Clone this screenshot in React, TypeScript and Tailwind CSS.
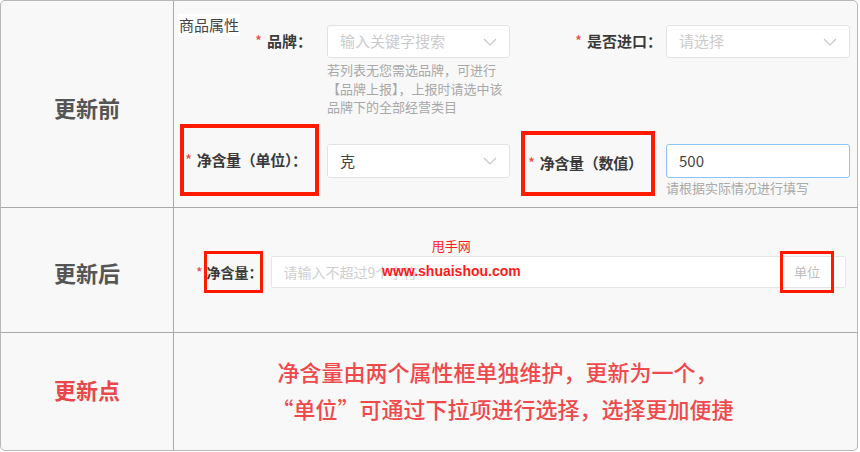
import React from "react";

function Chevron() {
  return (
    <svg width="14" height="8" viewBox="0 0 14 8" className="shrink-0">
      <polyline points="1,1 7,7 13,1" fill="none" stroke="#c6c6c6" strokeWidth="1.2" />
    </svg>
  );
}

function Star() {
  return <span className="text-[#f04040] font-normal mr-[5px]">*</span>;
}

export default function App() {
  return (
    <div className="w-[860px] h-[452px] bg-white font-['Noto_Sans_CJK_SC','Noto_Sans',sans-serif]">
      <div className="w-[858px] h-[451px] border border-[#b8b8b8] rounded-[5px] bg-[#f8f8f8] grid grid-cols-[173px_1fr] grid-rows-[207px_125px_1fr] overflow-hidden">
        {/* Row 1 left */}
        <div className="border-r border-b border-[#a9a9a9] flex items-center justify-center pt-[6px]">
          <span className="text-[22px] font-bold text-[#555]">更新前</span>
        </div>
        {/* Row 1 right */}
        <div className="border-b border-[#a9a9a9] pt-[13px] text-[#3a3a3a]">
          <div className="ml-[4px] h-[22px] w-fit bg-white px-[1px] text-[15px] leading-[22px] text-[#444]">商品属性</div>
          <div className="-mt-[11px] grid grid-cols-[153px_183px_156px_184px]">
            {/* row A */}
            <div className="h-[33px] flex items-center justify-end pr-[15px] text-[15px] font-semibold">
              <Star />品牌：
            </div>
            <div className="h-[33px] bg-white border border-[#e3e3e3] rounded-[3px] flex items-center justify-between pl-[12px] pr-[12px]">
              <span className="text-[15px] text-[#cbcbcb]">输入关键字搜索</span>
              <Chevron />
            </div>
            <div className="h-[33px] flex items-center justify-end pr-[4px] text-[15px] font-semibold">
              <Star />是否进口：
            </div>
            <div className="h-[33px] bg-white border border-[#e3e3e3] rounded-[3px] flex items-center justify-between pl-[12px] pr-[12px]">
              <span className="text-[15px] text-[#cbcbcb]">请选择</span>
              <Chevron />
            </div>
            {/* row B */}
            <div />
            <div className="col-span-3 mt-[3px] text-[13px] leading-[18.5px] text-[#a8a8a8] h-[55px]">
              <div>若列表无您需选品牌，可进行</div>
              <div>【品牌上报】，上报时请选中该</div>
              <div>品牌下的全部经营类目</div>
            </div>
            {/* row C */}
            <div className="mt-[8px]">
              <div className="ml-[6px] w-[139px] h-[72px] border-[4px] border-[#ff1a00] flex items-center pl-[1px] text-[15px] font-semibold whitespace-nowrap tracking-[-0.3px]">
                <Star />净含量（单位）：
              </div>
            </div>
            <div className="mt-[28px] h-[34px] bg-white border border-[#e3e3e3] rounded-[3px] flex items-center justify-between pl-[12px] pr-[12px]">
              <span className="text-[15px] text-[#444]">克</span>
              <Chevron />
            </div>
            <div className="mt-[15px]">
              <div className="ml-[11px] w-[134px] h-[65px] border-[4px] border-[#ff1a00] flex items-center pl-[3px] text-[15px] font-semibold whitespace-nowrap tracking-[-0.3px]">
                <Star />净含量（数值）
              </div>
            </div>
            <div className="mt-[28px]">
              <div className="h-[34px] bg-white border border-[#8cc4f3] rounded-[3px] flex items-center pl-[12px]">
                <span className="text-[15px] text-[#444]">500</span>
              </div>
              <div className="mt-[1px] text-[13px] leading-[17px] text-[#a8a8a8]">请根据实际情况进行填写</div>
            </div>
          </div>
        </div>

        {/* Row 2 left */}
        <div className="border-r border-b border-[#a9a9a9] flex items-center justify-center pt-[4px]">
          <span className="text-[22px] font-bold text-[#555]">更新后</span>
        </div>
        {/* Row 2 right */}
        <div className="relative border-b border-[#a9a9a9] flex items-center pl-[22px] pr-[11px] pt-[4px]">
          <span className="text-[14px] text-[#f04040] mr-[1px]">*</span>
          <div className="w-[59px] h-[42px] border-[3px] border-[#ff1a00] flex items-center text-[14px] font-semibold text-[#3a3a3a] whitespace-nowrap">
            净含量：
          </div>
          <div className="ml-[8px] flex-1 h-[32px] bg-white border border-[#e6e6e6] rounded-[2px] flex items-center pl-[12px] pr-[11px]">
            <span className="text-[14px] text-[#cfcfcf]">请输入不超过9个字符</span>
            <div className="ml-auto -my-[6px] w-[54px] h-[42px] border-[3px] border-[#ff1a00] flex items-center justify-center text-[13px] text-[#bdbdbd]">
              单位
            </div>
          </div>
          {/* watermark */}
          <div className="absolute left-[208px] top-[30px] flex flex-col items-center pointer-events-none">
            <span className="text-[13px] leading-[16px] text-[#ff1a1a]">甩手网</span>
            <span className="mt-[8px] text-[14px] leading-[18px] font-bold text-[#ff1a1a] font-['Liberation_Sans',sans-serif]">www.shuaishou.com</span>
          </div>
        </div>

        {/* Row 3 left */}
        <div className="border-r border-[#a9a9a9] flex items-center justify-center pb-[4px]">
          <span className="text-[22px] font-bold text-[#e8484a]">更新点</span>
        </div>
        {/* Row 3 right */}
        <div className="flex flex-col items-center justify-center pb-[4px] pr-[26px] text-[22px] leading-[37px] font-medium text-[#f0494b]">
          <div className="pr-[10px]">净含量由两个属性框单独维护，更新为一个，</div>
          <div>“单位”可通过下拉项进行选择，选择更加便捷</div>
        </div>
      </div>
    </div>
  );
}
